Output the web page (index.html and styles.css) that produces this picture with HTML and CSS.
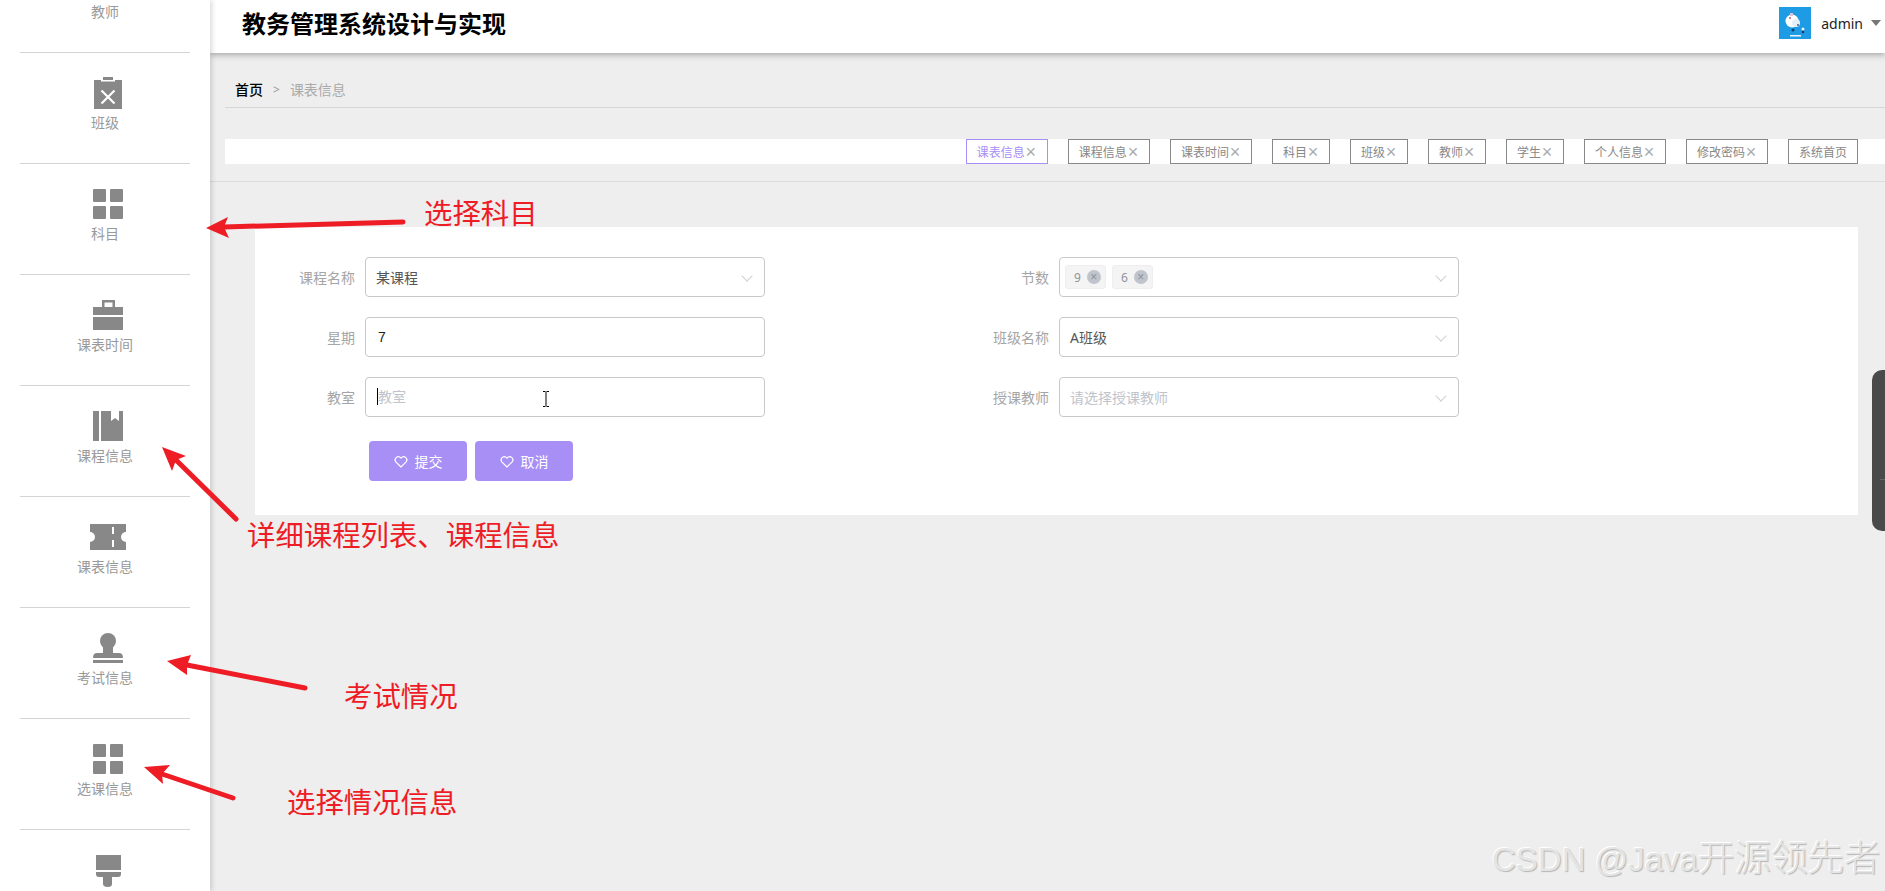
FILE: index.html
```html
<!DOCTYPE html>
<html lang="zh-CN">

<head>
    <meta charset="UTF-8">
    <meta name="viewport" content="width=device-width, initial-scale=1.0">
    <title>教务管理系统设计与实现</title>
    <link rel="stylesheet" href="styles.css">
</head>

<body>
    <div class="page">
        <!-- 左侧菜单 -->
        <aside class="side">
            <ul class="side-list">
                <li>
                    <svg class="side-icon" viewBox="0 0 30 30"><rect x="3" y="4" width="24" height="26"/></svg>
                    <span>教师</span>
                </li>
                <li>
                    <svg class="side-icon" viewBox="0 0 30 30">
                        <rect x="10" y="-1" width="10" height="3"/>
                        <path d="M1 2H8V3.500H22V2H29V31H1Z"/>
                        <path class="icon-cut" d="M8.500 12.500L21.500 25.500M21.500 12.500L8.500 25.500"/>
                    </svg>
                    <span>班级</span>
                </li>
                <li>
                    <svg class="side-icon" viewBox="0 0 30 30">
                        <rect width="13" height="13" rx="1"/>
                        <rect x="17" width="13" height="13" rx="1"/>
                        <rect y="17" width="13" height="13" rx="1"/>
                        <rect x="17" y="17" width="13" height="13" rx="1"/>
                    </svg>
                    <span>科目</span>
                </li>
                <li>
                    <svg class="side-icon" viewBox="0 0 30 30">
                        <path fill-rule="evenodd" d="M9 7V0H22V7ZM11.500 2.500V7H19.500V2.500Z"/>
                        <rect y="7" width="30" height="8"/>
                        <rect y="17" width="30" height="13"/>
                    </svg>
                    <span>课表时间</span>
                </li>
                <li>
                    <svg class="side-icon" viewBox="0 0 30 30">
                        <rect width="6" height="30"/>
                        <path d="M8 0H18V10L22 7L26 10V0H30V30H8Z"/>
                    </svg>
                    <span>课程信息</span>
                </li>
                <li>
                    <svg class="side-icon" viewBox="0 0 30 30">
                        <path fill-rule="evenodd" d="M-3 2H33V10A5 5 0 0 0 33 20V28H-3V20A5 5 0 0 0 -3 10ZM19 5V12H21V5ZM19 18V25H21V18Z"/>
                    </svg>
                    <span>课表信息</span>
                </li>
                <li>
                    <svg class="side-icon" viewBox="0 0 30 30">
                        <circle cx="15" cy="8" r="8"/>
                        <path d="M10 12H20V20H26Q30 20 30 25H0Q0 20 4 20H10Z"/>
                        <rect y="27" width="30" height="3"/>
                    </svg>
                    <span>考试信息</span>
                </li>
                <li>
                    <svg class="side-icon" viewBox="0 0 30 30">
                        <rect width="13" height="13" rx="1"/>
                        <rect x="17" width="13" height="13" rx="1"/>
                        <rect y="17" width="13" height="13" rx="1"/>
                        <rect x="17" y="17" width="13" height="13" rx="1"/>
                    </svg>
                    <span>选课信息</span>
                </li>
                <li>
                    <svg class="side-icon" viewBox="0 0 30 30">
                        <rect x="3" width="25" height="15"/>
                        <path d="M3 17H28V19Q28 22 25 22H19V29Q19 32 15 32Q10 32 10 29V22H6Q3 22 3 19Z"/>
                    </svg>
                </li>
            </ul>
        </aside>

        <main class="main">
            <header class="top">
                <h1 class="title">教务管理系统设计与实现</h1>
                <div class="user">
                    <svg class="avatar" viewBox="0 0 32 32">
                        <rect width="32" height="32" fill="#1d9ce5"/>
                        <circle cx="13" cy="14" r="6.500" fill="#fff"/>
                        <circle cx="17" cy="16" r="4" fill="#e6eef7"/>
                        <rect x="11" y="6" width="3" height="3" fill="#d9c6d8"/>
                        <circle cx="11" cy="11" r="1" fill="#c05a70"/>
                        <circle cx="19" cy="18" r="1" fill="#3b5fa8"/>
                        <circle cx="14" cy="23" r="1.500" fill="#16406b"/>
                        <circle cx="24" cy="22" r="1.500" fill="#e8f4fb"/>
                        <circle cx="24" cy="25" r="1.300" fill="#24365f"/>
                        <rect x="11" y="28" width="11" height="1.500" fill="#e8f4fb"/>
                    </svg>
                    <span class="user-name">admin</span>
                    <i class="user-arrow"></i>
                </div>
            </header>

            <div class="crumb">
                <span class="crumb-home">首页</span>
                <span class="crumb-sep">&gt;</span>
                <span class="crumb-now">课表信息</span>
            </div>

            <div class="tabs-wrap">
                <ul class="tabs">
                    <li class="active">课表信息<span class="tab-x">×</span></li>
                    <li>课程信息<span class="tab-x">×</span></li>
                    <li>课表时间<span class="tab-x">×</span></li>
                    <li>科目<span class="tab-x">×</span></li>
                    <li>班级<span class="tab-x">×</span></li>
                    <li>教师<span class="tab-x">×</span></li>
                    <li>学生<span class="tab-x">×</span></li>
                    <li>个人信息<span class="tab-x">×</span></li>
                    <li>修改密码<span class="tab-x">×</span></li>
                    <li class="home">系统首页</li>
                </ul>
            </div>

            <form class="card">
                <div class="form-grid">
                    <div class="field">
                        <label>课程名称</label>
                        <div class="control select"><span class="value">某课程</span><i class="chevron"></i></div>
                    </div>
                    <div class="field">
                        <label>节数</label>
                        <div class="control select multi">
                            <span class="tag">9<i class="tag-x">×</i></span>
                            <span class="tag">6<i class="tag-x">×</i></span>
                            <i class="chevron"></i>
                        </div>
                    </div>
                    <div class="field">
                        <label>星期</label>
                        <input class="control text" type="text" value="7">
                    </div>
                    <div class="field">
                        <label>班级名称</label>
                        <div class="control select"><span class="value">A班级</span><i class="chevron"></i></div>
                    </div>
                    <div class="field">
                        <label>教室</label>
                        <div class="input-wrap">
                            <input class="control text" type="text" placeholder="教室">
                            <i class="text-caret"></i>
                            <svg class="ibeam" viewBox="0 0 8 16">
                                <path d="M1 .5H3.500M4.500 .5H7M4 1V15M1 15.500H3.500M4.500 15.500H7" stroke="#000" fill="none"/>
                            </svg>
                        </div>
                    </div>
                    <div class="field">
                        <label>授课教师</label>
                        <div class="control select"><span class="placeholder">请选择授课教师</span><i class="chevron"></i></div>
                    </div>
                </div>
                <div class="btns">
                    <button type="button" class="btn">
                        <svg class="heart" viewBox="0 0 14 13"><path d="M7 12L1.800 6.800C-.5 3.500 3.800-.5 7 3C10.200-.5 14.500 3.500 12.200 6.800Z"/></svg>提交
                    </button>
                    <button type="button" class="btn">
                        <svg class="heart" viewBox="0 0 14 13"><path d="M7 12L1.800 6.800C-.5 3.500 3.800-.5 7 3C10.200-.5 14.500 3.500 12.200 6.800Z"/></svg>取消
                    </button>
                </div>
            </form>
        </main>

        <!-- 右侧悬浮条 -->
        <div class="float-bar"></div>

        <!-- 截图上的标注 -->
        <svg class="marks" viewBox="0 0 1885 891">
            <g class="mark-line">
                <path d="M403 222L224 227"/>
                <path d="M236 519L176 460"/>
                <path d="M305 688L187 665"/>
                <path d="M233 798L162 774"/>
            </g>
            <g class="mark-head">
                <path d="M206 228L228 217L224 227L229 238Z"/>
                <path d="M162 447L186 456L176 460L172 471Z"/>
                <path d="M167 661L191 655L187 665L187 675Z"/>
                <path d="M144 767L170 765L162 774L163 784Z"/>
            </g>
        </svg>
        <span class="note note-1">选择科目</span>
        <span class="note note-2">详细课程列表、课程信息</span>
        <span class="note note-3">考试情况</span>
        <span class="note note-4">选择情况信息</span>

        <div class="watermark">CSDN @Java<span>开源领先者</span></div>
    </div>
</body>

</html>
```

FILE: styles.css
```css
* {
    padding: 0;
    margin: 0;
    box-sizing: border-box;
}

li {
    list-style: none;
}

body {
    background-color: #eee;
    font-family: "Noto Sans", "Noto Sans CJK SC", sans-serif;
    font-size: 14px;
    overflow: hidden;
}

.page {
    position: relative;
    display: flex;
    height: 891px;
    overflow: hidden;
}

/* 左侧菜单 */
.side {
    position: relative;
    z-index: 2;
    flex: none;
    width: 210px;
    height: 891px;
    overflow: hidden;
    background-color: #fff;
    box-shadow: 2px 0 5px rgba(0, 0, 0, .15);
}

.side-list {
    margin-top: -58px;
}

.side-list li {
    display: flex;
    flex-direction: column;
    align-items: center;
    height: 111px;
    margin: 0 20px;
    padding-top: 25px;
    border-bottom: 1px solid #d4d4d4;
    color: #999;
    line-height: 20px;
}

.side-list li:last-child {
    border-bottom: 0;
}

.side-icon {
    width: 30px;
    height: 30px;
    margin-left: 6px;
    margin-bottom: 5px;
    fill: #888;
    overflow: visible;
}

.icon-cut {
    fill: none;
    stroke: #fff;
    stroke-width: 2.200;
}

.main {
    flex: 1;
    min-width: 0;
}

/* 顶部 */
.top {
    position: relative;
    z-index: 1;
    display: flex;
    justify-content: space-between;
    align-items: center;
    height: 53px;
    padding: 0 4px 7px 32px;
    background-color: #fff;
    box-shadow: 0 2px 6px rgba(0, 0, 0, .3);
}

.title {
    color: #000;
    font-size: 24px;
    font-weight: bold;
    font-family: "Noto Sans CJK SC", sans-serif;
    line-height: 50px;
}

.user {
    display: flex;
    align-items: center;
}

.avatar {
    width: 32px;
    height: 32px;
}

.user-name {
    margin-left: 10px;
    color: #222;
}

.user-arrow {
    width: 0;
    height: 0;
    margin-left: 8px;
    border-left: 5px solid transparent;
    border-right: 5px solid transparent;
    border-top: 6px solid #777;
}

/* 面包屑 */
.crumb {
    display: flex;
    align-items: center;
    gap: 10px;
    height: 55px;
    margin-left: 15px;
    padding: 18px 0 0 10px;
    border-bottom: 1px solid #d6d6d6;
}

.crumb-home {
    color: #000;
    font-weight: 500;
}

.crumb-sep {
    color: #999;
    font-size: 12px;
}

.crumb-now {
    color: #aaa;
}

/* 标签栏 */
.tabs-wrap {
    height: 74px;
    padding: 31px 0 0 15px;
    border-bottom: 1px solid #dcdcdc;
}

.tabs {
    display: flex;
    justify-content: flex-end;
    gap: 20px;
    height: 25px;
    padding-right: 27px;
    background-color: #fff;
}

.tabs li {
    display: flex;
    align-items: center;
    height: 25px;
    padding: 0 12px 0 10px;
    border: 1px solid #888;
    color: #888;
    font-size: 12px;
}

.tabs .home {
    padding-right: 10px;
}

.tabs .active {
    border-color: #a78ff5;
    color: #a78ff5;
}

.tab-x {
    display: flex;
    justify-content: center;
    width: 8px;
    margin-left: 2px;
    color: #aaa;
    font-family: "Liberation Sans", sans-serif;
    font-size: 18px;
    font-weight: 300;
    line-height: 1;
}

/* 表单 */
.card {
    height: 288px;
    margin: 45px 27px 0 45px;
    padding-top: 30px;
    background-color: #fff;
}

.form-grid {
    display: grid;
    grid-template-columns: 694px 1fr;
    row-gap: 20px;
}

.field {
    display: flex;
    align-items: center;
}

.field label {
    width: 100px;
    margin-right: 10px;
    color: #a5a5a5;
    text-align: right;
}

.control {
    width: 400px;
    height: 40px;
    border: 1px solid #c8c8c8;
    border-radius: 4px;
    background-color: #fff;
    font-family: inherit;
    font-size: 14px;
}

.text {
    padding: 0 12px;
    color: #222;
    font-family: "Liberation Sans", "Noto Sans CJK SC", sans-serif;
    outline: 0;
}

.text::placeholder {
    color: #c0c4cc;
    font-family: "Noto Sans CJK SC", sans-serif;
}

.select {
    position: relative;
    display: flex;
    align-items: center;
    padding-left: 10px;
}

.select .value {
    color: #555;
}

.select .placeholder {
    color: #c0c4cc;
}

.multi {
    gap: 6px;
    padding-left: 5px;
}

.tag {
    display: flex;
    align-items: center;
    width: 41px;
    height: 24px;
    padding-left: 8px;
    border: 1px solid #eee;
    border-radius: 3px;
    background-color: #f4f4f5;
    color: #909399;
    font-size: 12px;
}

.tag-x {
    width: 14px;
    height: 14px;
    margin-left: 6px;
    border-radius: 50%;
    background-color: #c0c4cc;
    color: #909399;
    font-family: "Liberation Sans", sans-serif;
    font-size: 12px;
    font-style: normal;
    line-height: 14px;
    text-align: center;
}

.chevron {
    position: absolute;
    top: 14px;
    right: 13px;
    width: 8px;
    height: 8px;
    border-right: 1px solid #d0d0d0;
    border-bottom: 1px solid #d0d0d0;
    transform: rotate(45deg);
}

.input-wrap {
    position: relative;
}

.text-caret {
    position: absolute;
    top: 11px;
    left: 12px;
    width: 1px;
    height: 17px;
    background-color: #000;
}

.ibeam {
    position: absolute;
    top: 14px;
    left: 177px;
    width: 8px;
    height: 16px;
}

/* 按钮 */
.btns {
    display: flex;
    gap: 8px;
    margin-top: 24px;
    padding-left: 114px;
}

.btn {
    display: flex;
    justify-content: center;
    align-items: center;
    gap: 7px;
    width: 98px;
    height: 40px;
    border: 0;
    border-radius: 4px;
    background-color: #a78ff5;
    color: #fff;
    font-family: inherit;
    font-size: 14px;
}

.heart {
    width: 14px;
    height: 13px;
    fill: none;
    stroke: #fff;
    stroke-width: 1.200;
    overflow: visible;
}

/* 悬浮条 */
.float-bar {
    position: absolute;
    top: 370px;
    right: 0;
    width: 13px;
    height: 161px;
    border-radius: 10px 0 0 10px;
    background-color: #4a4a4a;
}

.float-bar::after {
    content: "";
    position: absolute;
    top: 109px;
    right: 0;
    width: 5px;
    height: 1px;
    background-color: #666;
}

/* 标注 */
.marks {
    position: absolute;
    top: 0;
    left: 0;
    z-index: 3;
    width: 1885px;
    height: 891px;
    pointer-events: none;
}

.mark-line path {
    fill: none;
    stroke: #ee1c25;
    stroke-width: 5;
    stroke-linecap: round;
}

.mark-head path {
    fill: #ee1c25;
}

.note {
    position: absolute;
    z-index: 3;
    color: #ee1c25;
    font-family: "Noto Sans CJK SC", sans-serif;
    font-size: 28.400px;
    line-height: 36px;
    white-space: nowrap;
}

.note-1 {
    top: 194px;
    left: 424px;
}

.note-2 {
    top: 516px;
    left: 247px;
}

.note-3 {
    top: 677px;
    left: 344px;
}

.note-4 {
    top: 783px;
    left: 287px;
}

/* 水印 */
.watermark {
    position: absolute;
    top: 833px;
    left: 1492px;
    z-index: 3;
    color: #e4e4e4;
    font-family: "Liberation Sans", "Noto Sans CJK SC", sans-serif;
    font-size: 33px;
    line-height: 46px;
    white-space: nowrap;
    text-shadow: 1px 1px 1px #b5b5b5, -1px -1px 0 #fff;
}

.watermark span {
    font-family: "Noto Sans CJK SC", sans-serif;
    font-size: 36.500px;
    font-weight: 300;
}
```
